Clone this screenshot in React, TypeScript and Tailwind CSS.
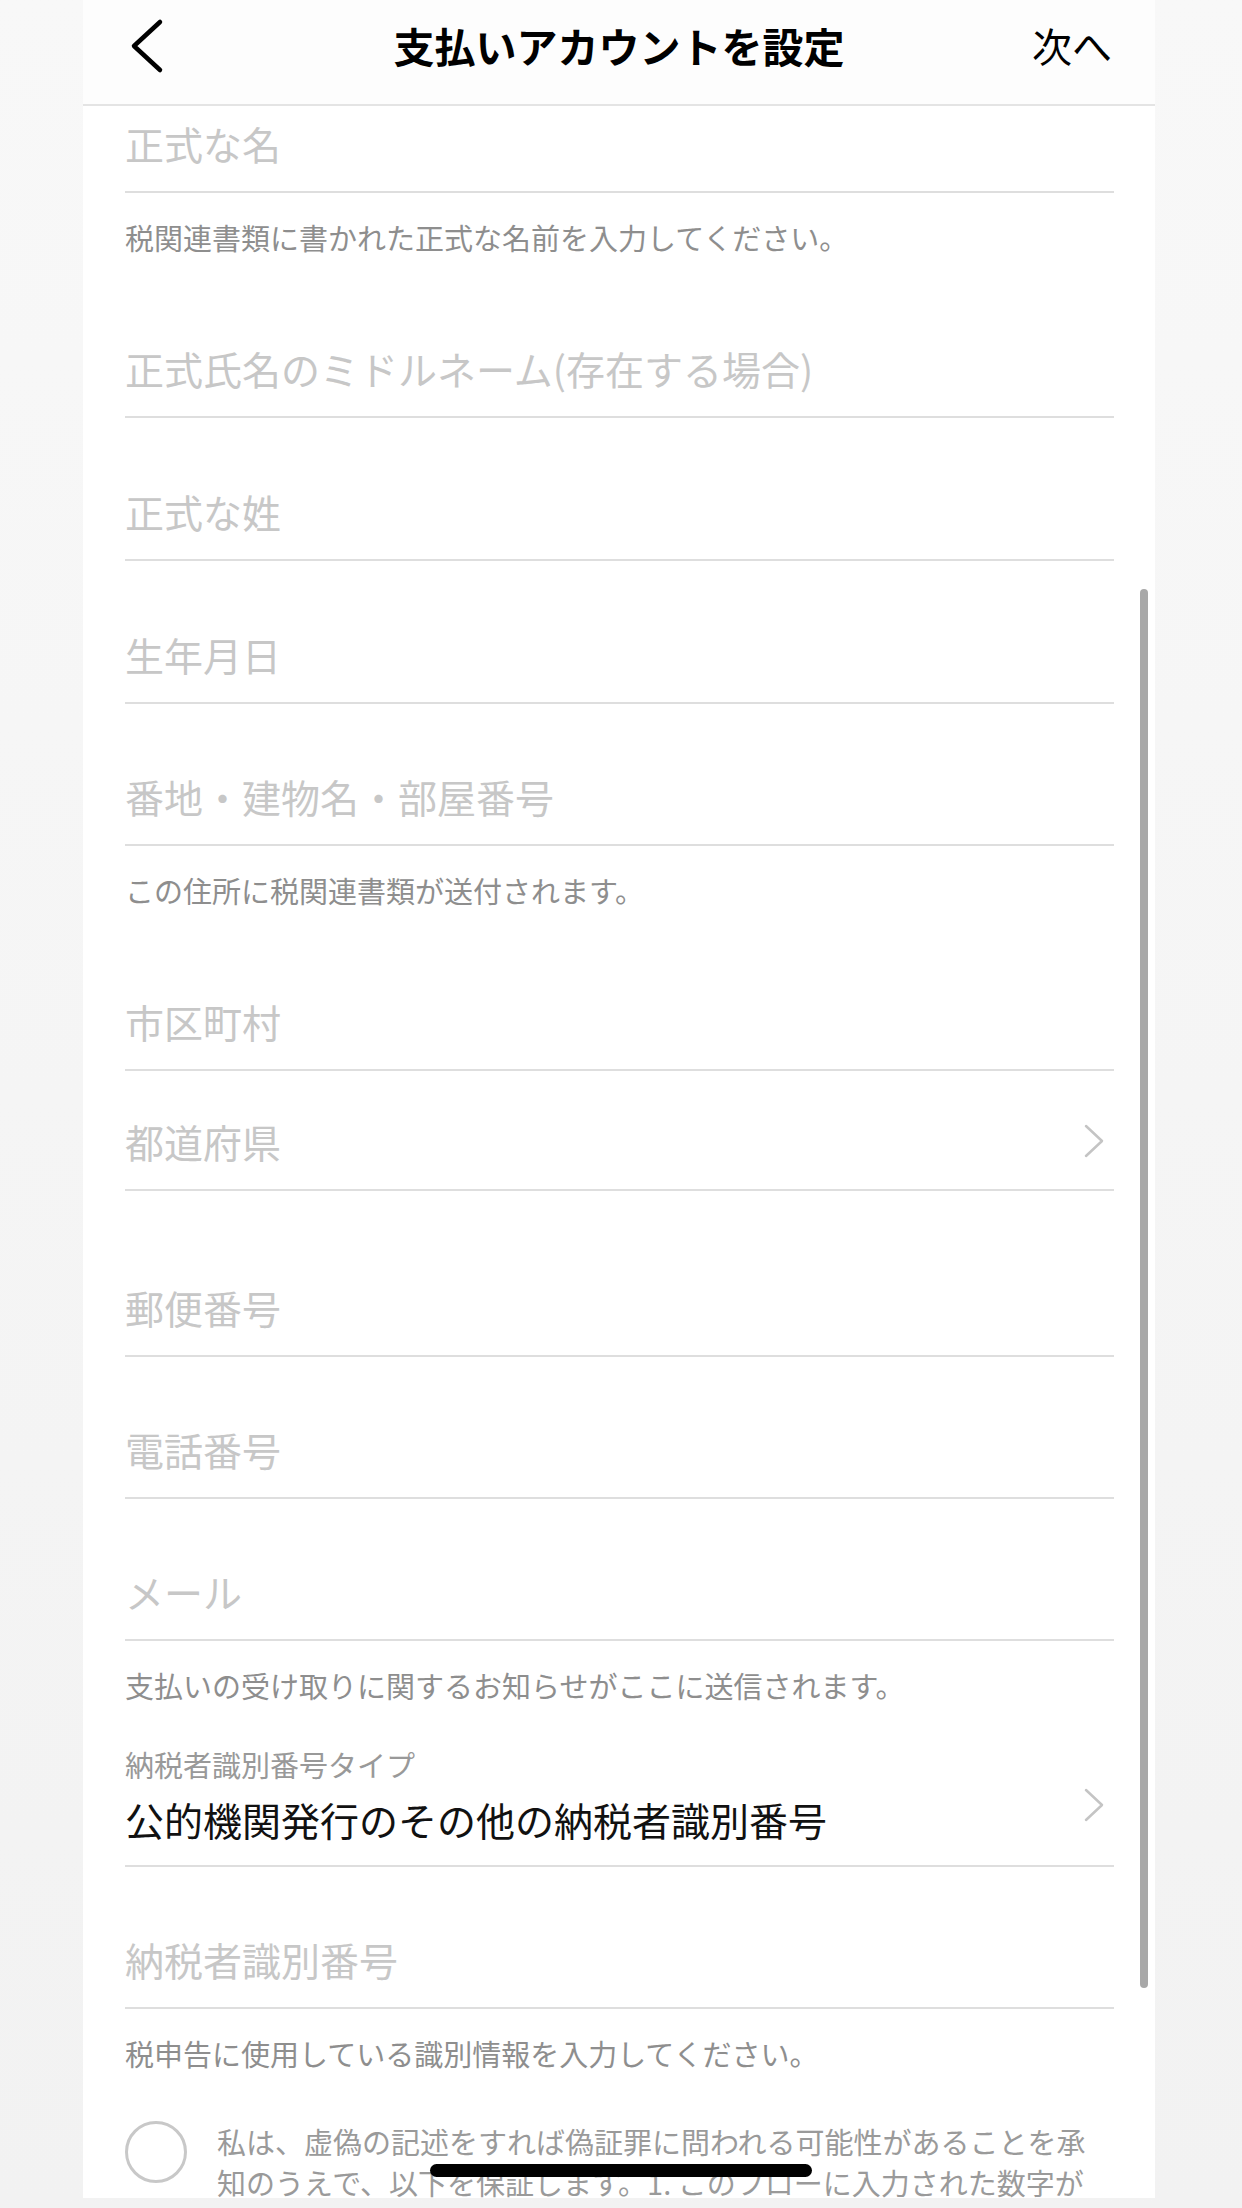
import React from "react";

type FieldProps = {
  label: string;
  height: string;
  chevron?: boolean;
};

const Chevron: React.FC = () => (
  <svg width="22" height="34" viewBox="0 0 22 34" fill="none" className="shrink-0">
    <polyline
      points="3,2 19,17 3,32"
      stroke="#c4c4c4"
      strokeWidth="2.5"
      strokeLinecap="round"
      strokeLinejoin="round"
    />
  </svg>
);

const Field: React.FC<FieldProps> = ({ label, height, chevron }) => (
  <div className={`flex items-end justify-between border-b-2 border-[#dedede] pb-[25px] ${height}`}>
    <span className="text-[39px] leading-[46px] text-[#c7c7c7]">{label}</span>
    {chevron && (
      <div className="flex h-[46px] items-center pr-[9px]">
        <Chevron />
      </div>
    )}
  </div>
);

const Helper: React.FC<{ text: string }> = ({ text }) => (
  <div className="h-[83px] pt-[24px] text-[29px] leading-[40px] text-[#8e8e8e]">{text}</div>
);

const App: React.FC = () => {
  return (
    <div className="h-[2208px] w-[1242px] overflow-hidden bg-gradient-to-b from-[#f8f8f8] to-[#f2f2f2] font-['Noto_Sans_CJK_JP',sans-serif]">
      <div className="relative ml-[83px] h-[2198px] w-[1072px] overflow-hidden bg-white">
        {/* header */}
        <div className="relative flex h-[106px] items-center justify-between border-b-2 border-[#e4e4e4] bg-[#fdfdfd] pl-[47px] pr-[43px]">
          <svg width="34" height="56" viewBox="0 0 34 56" fill="none" className="-mt-[12px]">
            <polyline
              points="30,4 4,28 30,52"
              stroke="#000"
              strokeWidth="4.5"
              strokeLinecap="round"
              strokeLinejoin="round"
            />
          </svg>
          <h1 className="absolute left-1/2 top-[21px] -translate-x-1/2 text-[41px] font-bold leading-[48px] text-black">
            支払いアカウントを設定
          </h1>
          <span className="-mt-[14px] text-[40px] leading-[48px] text-black">次へ</span>
        </div>

        {/* form */}
        <div className="pl-[42px] pr-[41px]">
          <Field label="正式な名" height="h-[87px]" />
          <Helper text="税関連書類に書かれた正式な名前を入力してください。" />
          <Field label="正式氏名のミドルネーム(存在する場合)" height="h-[142px]" />
          <Field label="正式な姓" height="h-[143px]" />
          <Field label="生年月日" height="h-[143px]" />
          <Field label="番地・建物名・部屋番号" height="h-[142px]" />
          <Helper text="この住所に税関連書類が送付されます。" />
          <Field label="市区町村" height="h-[142px]" />
          <Field label="都道府県" height="h-[120px]" chevron />
          <Field label="郵便番号" height="h-[166px]" />
          <Field label="電話番号" height="h-[142px]" />
          <Field label="メール" height="h-[142px]" />
          <Helper text="支払いの受け取りに関するお知らせがここに送信されます。" />

          <div className="flex h-[143px] items-center justify-between border-b-2 border-[#dedede] pb-[2px] pt-[22px]">
            <div className="flex flex-col self-start">
              <span className="text-[29px] leading-[36px] text-[#999]">納税者識別番号タイプ</span>
              <span className="mt-[14px] text-[39px] leading-[46px] text-[#111]">
                公的機関発行のその他の納税者識別番号
              </span>
            </div>
            <div className="pr-[9px]">
              <Chevron />
            </div>
          </div>

          <Field label="納税者識別番号" height="h-[142px]" />
          <Helper text="税申告に使用している識別情報を入力してください。" />

          <div className="flex items-start gap-[30px] pt-[29px]">
            <div className="h-[62px] w-[62px] shrink-0 rounded-full border-[3px] border-[#c8c8c8]" />
            <p className="text-[29px] leading-[41px] text-[#9a9a9a]">
              私は、虚偽の記述をすれば偽証罪に問われる可能性があることを承
              <br />
              知のうえで、以下を保証します。1. このフローに入力された数字が
            </p>
          </div>
        </div>

        {/* scrollbar */}
        <div className="absolute left-[1057px] top-[589px] h-[1399px] w-[8px] rounded-full bg-[#a8a8a8]" />

        {/* home indicator */}
        <div className="absolute left-[347px] top-[2164px] h-[13px] w-[382px] rounded-full bg-black" />
      </div>
    </div>
  );
};

export default App;
